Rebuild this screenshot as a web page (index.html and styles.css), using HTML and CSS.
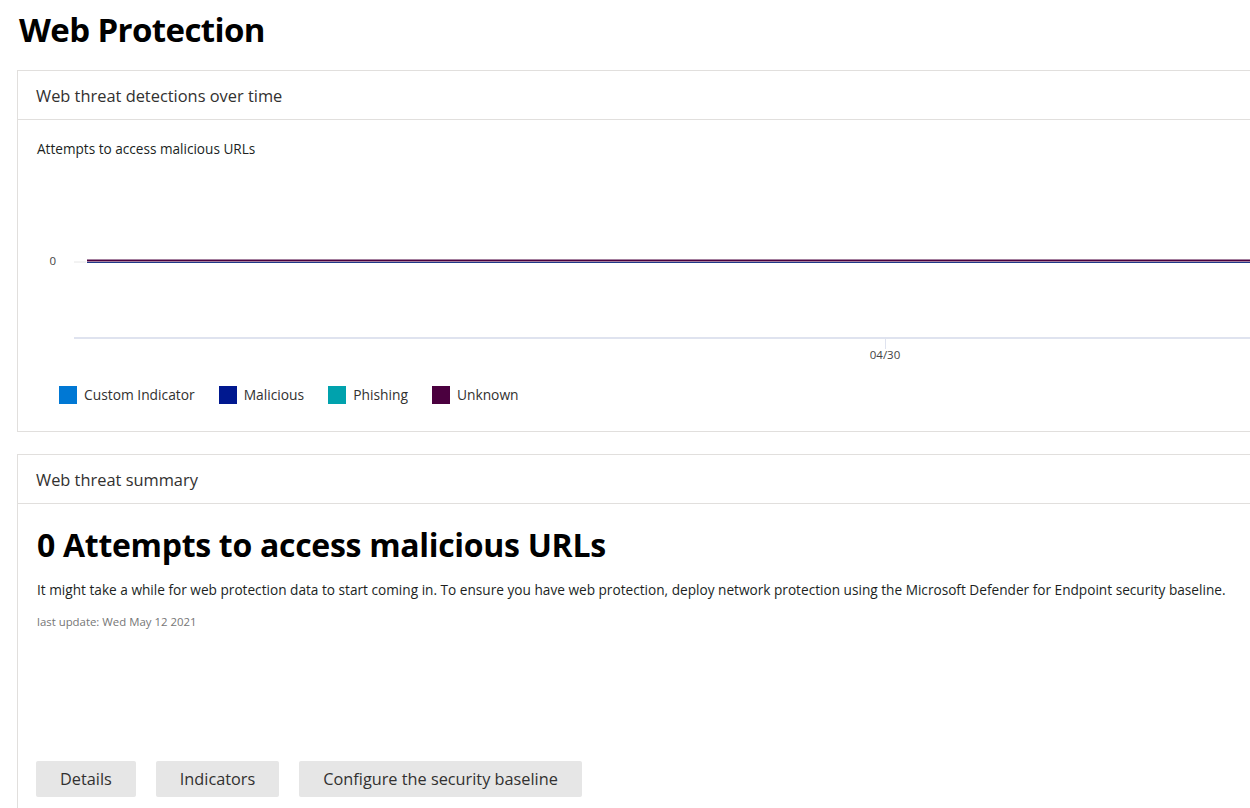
FILE: index.html
```html
<!DOCTYPE html>
<html lang="en">
<head>
<meta charset="utf-8">
<title>Web Protection</title>
<link rel="stylesheet" href="styles.css">
</head>
<body>
<main class="page">
  <h1 class="page-title">Web Protection</h1>

  <section class="card">
    <header class="card-header">Web threat detections over time</header>
    <div class="card-body chart-body">
      <div class="chart-subtitle">Attempts to access malicious URLs</div>
      <svg class="chart" width="1240" height="210" viewBox="0 0 1240 210">
        <text x="38" y="105" class="axis-label" text-anchor="end">0</text>
        <line x1="56" y1="102" x2="68" y2="102" stroke="#e6e6e6" stroke-width="1"/>
        <line x1="69" y1="102.5" x2="1240" y2="102.5" stroke="#1e3a8a" stroke-width="1"/>
        <line x1="69" y1="100.5" x2="1240" y2="100.5" stroke="#4b003f" stroke-width="2"/>
        <line x1="56" y1="178" x2="1240" y2="178" stroke="#dfe3ef" stroke-width="2"/>
        <line x1="867.5" y1="178" x2="867.5" y2="189" stroke="#dfe3ef" stroke-width="1"/>
        <text x="867" y="199" class="tick-label" text-anchor="middle">04/30</text>
      </svg>
      <ul class="legend">
        <li class="legend-item"><span class="swatch sw-custom"></span>Custom Indicator</li>
        <li class="legend-item"><span class="swatch sw-malicious"></span>Malicious</li>
        <li class="legend-item"><span class="swatch sw-phishing"></span>Phishing</li>
        <li class="legend-item"><span class="swatch sw-unknown"></span>Unknown</li>
      </ul>
    </div>
  </section>

  <section class="card card-summary">
    <header class="card-header">Web threat summary</header>
    <div class="card-body summary-body">
      <h2 class="summary-title">0 Attempts to access malicious URLs</h2>
      <p class="summary-text">It might take a while for web protection data to start coming in. To ensure you have web protection, deploy network protection using the Microsoft Defender for Endpoint security baseline.</p>
      <p class="summary-update">last update: Wed May 12 2021</p>
      <div class="actions">
        <button class="btn">Details</button>
        <button class="btn">Indicators</button>
        <button class="btn">Configure the security baseline</button>
      </div>
    </div>
  </section>
</main>
</body>
</html>
```

FILE: styles.css
```css
* { box-sizing: border-box; }
html, body {
  margin: 0;
  padding: 0;
  background: #ffffff;
  overflow: hidden;
}
body {
  font-family: "Open Sans", "Noto Sans", "Liberation Sans", sans-serif;
  color: #323130;
  width: 1250px;
  height: 808px;
}
.page {
  padding: 10px 0 0 17px;
  width: 1300px;
}
.page-title {
  margin: 0 0 20px 2px;
  font-size: 33px;
  line-height: 40px;
  font-weight: 700;
  color: #000;
  letter-spacing: -0.6px;
}
.card {
  border: 1px solid #e1dfdd;
  width: 1260px;
  background: #fff;
  margin-bottom: 22px;
}
.card-header {
  height: 49px;
  line-height: 50px;
  padding: 0 18px;
  font-size: 16.4px;
  color: #323130;
  border-bottom: 1px solid #e1dfdd;
}
.chart-body {
  padding: 20px 0 26px 0;
}
.chart-subtitle {
  font-size: 13.6px;
  line-height: 18px;
  padding-left: 19px;
  color: #201f1e;
}
.chart {
  display: block;
  margin-top: 2px;
}
.axis-label, .tick-label {
  font-family: "Open Sans", "Noto Sans", sans-serif;
  font-size: 11.5px;
  fill: #444;
}
.legend {
  list-style: none;
  margin: 15px 0 0 0;
  padding: 0 0 0 41px;
  display: flex;
  gap: 24px;
}
.legend-item {
  display: flex;
  align-items: center;
  gap: 7px;
  font-size: 13.8px;
  line-height: 20px;
  color: #323130;
}
.swatch {
  width: 18px;
  height: 18px;
  display: inline-block;
}
.sw-custom { background: #0078d4; }
.sw-malicious { background: #00188f; }
.sw-phishing { background: #00a2ad; }
.sw-unknown { background: #4b003f; }

.card-summary {
  height: 400px;
}
.summary-body {
  padding: 20px 19px 0 19px;
}
.summary-title {
  margin: 0;
  font-size: 32px;
  line-height: 42px;
  font-weight: 700;
  color: #000;
  letter-spacing: -0.3px;
}
.summary-text {
  margin: 15px 0 0 0;
  font-size: 13.65px;
  line-height: 18px;
  color: #201f1e;
}
.summary-update {
  margin: 15px 0 0 0;
  font-size: 11.4px;
  line-height: 16px;
  color: #767676;
}
.actions {
  display: flex;
  gap: 20px;
  margin: 131px 0 0 -1px;
}
.btn {
  font-family: inherit;
  font-size: 16.3px;
  color: #323130;
  background: #e6e6e6;
  border: none;
  border-radius: 2px;
  height: 36px;
  padding: 0 24px;
}
```
